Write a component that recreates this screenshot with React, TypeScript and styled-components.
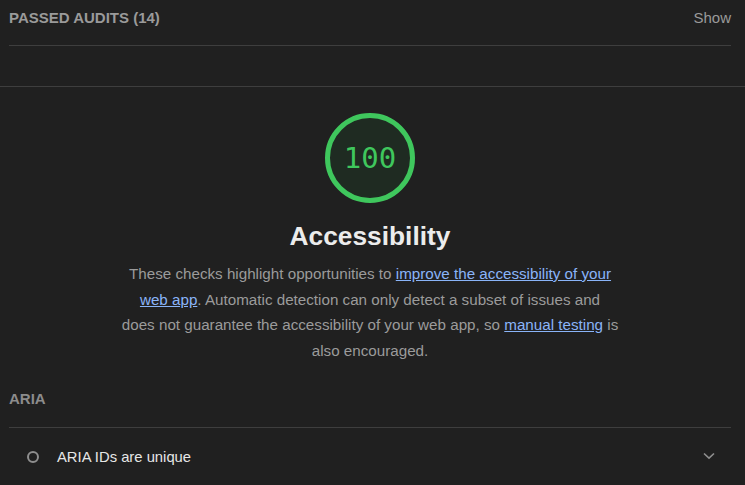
import React from "react";
import styled, { createGlobalStyle } from "styled-components";

const Global = createGlobalStyle`
  html, body { margin: 0; padding: 0; background: #202020; }
  body { font-family: "Liberation Sans", Arial, Helvetica, sans-serif; -webkit-font-smoothing: antialiased; }
  * { box-sizing: border-box; }
`;

const Page = styled.div`
  width: 745px;
  height: 485px;
  background: #202020;
  overflow: hidden;
`;

const Inset = styled.div`
  padding: 0 14px 0 9px;
`;

const ClumpHeader = styled.div`
  display: flex;
  justify-content: space-between;
  align-items: center;
  padding: 9px 0 18px;
  line-height: 18px;
  border-bottom: 1px solid #3e3e3e;
  color: #9e9e9e;
  font-size: 15px;
`;

const ClumpTitle = styled.span`
  text-transform: uppercase;
  font-weight: 700;
  color: #9a9a9a;
`;

const ShowButton = styled.span`
  color: #9a9a9a;
`;

const Spacer = styled.div`
  height: 40px;
`;

const Divider = styled.div`
  height: 1px;
  background: #3e3e3e;
`;

const Category = styled.section`
  display: flex;
  flex-direction: column;
  align-items: center;
  padding-top: 26px;
`;

const GaugeWrap = styled.div`
  position: relative;
  width: 90px;
  height: 90px;
  display: flex;
  align-items: center;
  justify-content: center;
`;

const GaugeSvg = styled.svg`
  position: absolute;
  inset: 0;
`;

const GaugeValue = styled.span`
  position: relative;
  font-family: "DejaVu Sans Mono", "Liberation Mono", monospace;
  font-size: 29px;
  color: #3fc75d;
`;

const Title = styled.h1`
  margin: 17px 0 0;
  font-size: 26.3px;
  line-height: 32px;
  font-weight: 700;
  color: #ececec;
`;

const Description = styled.p`
  margin: 9px 0 0;
  max-width: 520px;
  text-align: center;
  font-size: 15.2px;
  line-height: 25.5px;
  color: #9b9b9b;
`;

const Link = styled.a`
  color: #8ab4f8;
  text-decoration: underline;
`;

const GroupHeader = styled.div`
  margin-top: 27px;
  padding-bottom: 19px;
  line-height: 18px;
  font-size: 15px;
  font-weight: 700;
  color: #8c8c8c;
  border-bottom: 1px solid #3e3e3e;
`;

const AuditRow = styled.div`
  display: flex;
  align-items: center;
  padding: 20px 16px 0 18px;
  line-height: 18px;
`;

const PassIcon = styled.span`
  width: 12px;
  height: 12px;
  border-radius: 50%;
  border: 2px solid #8e8e8e;
  flex: none;
  margin-top: -1px;
`;

const AuditTitle = styled.span`
  flex: 1;
  margin-left: 18px;
  font-size: 14.8px;
  color: #e6e6e6;
`;

const Chevron = styled.svg`
  flex: none;
  margin-top: -2px;
`;

export default function App() {
  return (
    <Page>
      <Global />
      <Inset>
        <ClumpHeader>
          <ClumpTitle>Passed audits (14)</ClumpTitle>
          <ShowButton>Show</ShowButton>
        </ClumpHeader>
      </Inset>
      <Spacer />
      <Divider />
      <Inset>
        <Category>
          <GaugeWrap>
            <GaugeSvg viewBox="0 0 90 90" width="90" height="90">
              <circle cx="45" cy="45" r="42.5" fill="#1f2b22" stroke="#3fc75d" strokeWidth="5" />
            </GaugeSvg>
            <GaugeValue>100</GaugeValue>
          </GaugeWrap>
          <Title>Accessibility</Title>
          <Description>
            These checks highlight opportunities to{" "}
            <Link href="#">
              improve the accessibility of your
              <br />
              web app
            </Link>
            . Automatic detection can only detect a subset of issues and
            <br />
            does not guarantee the accessibility of your web app, so <Link href="#">manual testing</Link> is
            <br />
            also encouraged.
          </Description>
        </Category>
        <GroupHeader>ARIA</GroupHeader>
        <AuditRow>
          <PassIcon />
          <AuditTitle>ARIA IDs are unique</AuditTitle>
          <Chevron width="12" height="8" viewBox="0 0 12 8">
            <path d="M1 1.5 L6 6.2 L11 1.5" fill="none" stroke="#8e8e8e" strokeWidth="1.6" />
          </Chevron>
        </AuditRow>
      </Inset>
    </Page>
  );
}
